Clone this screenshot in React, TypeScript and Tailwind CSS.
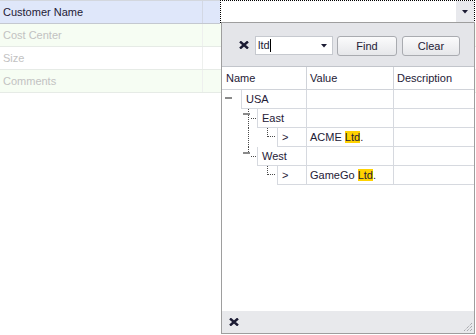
import React from 'react';

const ink = 'text-[#1e2036]';

const BoldX = () => (
  <svg width="10" height="8" viewBox="0 0 10 8" className="shrink-0">
    <path d="M1 0.5 L9 7.5 M9 0.5 L1 7.5" stroke="#1c1c34" strokeWidth="2.4" />
  </svg>
);

const Caret = () => (
  <svg width="6" height="4" viewBox="0 0 6 4" className="shrink-0">
    <path d="M0 0 H6 L3 3.5 Z" fill="#1c1c34" />
  </svg>
);

const Hi = ({ children }: { children: React.ReactNode }) => (
  <span className="bg-[#ffd200]">{children}</span>
);

const dot = { stroke: '#4a4a4a', strokeWidth: 1, strokeDasharray: '1 1', shapeRendering: 'crispEdges' as const };
const dash = '#8a8a8a';

// tree connector drawings, one per indent cell
const lines: Record<string, React.ReactNode> = {
  root: <rect x="3" y="7" width="7" height="2" fill={dash} />,
  groupFirst: (
    <>
      <line x1="26.5" y1="0" x2="26.5" y2="19" {...dot} />
      <rect x="21" y="4" width="7" height="2" fill={dash} />
      <line x1="29" y1="9.5" x2="35" y2="9.5" {...dot} />
    </>
  ),
  groupLast: (
    <>
      <line x1="26.5" y1="0" x2="26.5" y2="5" {...dot} />
      <rect x="21" y="5" width="7" height="2" fill={dash} />
      <line x1="29" y1="9.5" x2="35" y2="9.5" {...dot} />
    </>
  ),
  leafMid: (
    <>
      <line x1="26.5" y1="0" x2="26.5" y2="19" {...dot} />
      <line x1="45.5" y1="0" x2="45.5" y2="9" {...dot} />
      <line x1="46" y1="8.5" x2="54" y2="8.5" {...dot} />
    </>
  ),
  leafLast: (
    <>
      <line x1="45.5" y1="0" x2="45.5" y2="9" {...dot} />
      <line x1="46" y1="8.5" x2="54" y2="8.5" {...dot} />
    </>
  ),
};

interface Node {
  indent: number;
  kind: string;
  name: string;
  value?: React.ReactNode;
}

const nodes: Node[] = [
  { indent: 19, kind: 'root', name: 'USA' },
  { indent: 35, kind: 'groupFirst', name: 'East' },
  { indent: 55, kind: 'leafMid', name: '>', value: <span>ACME <Hi>Ltd</Hi>.</span> },
  { indent: 35, kind: 'groupLast', name: 'West' },
  { indent: 55, kind: 'leafLast', name: '>', value: <span>GameGo <Hi>Ltd</Hi>.</span> },
];

const TreeRow = ({ node }: { node: Node }) => (
  <div className="flex h-[19px]">
    <svg width={node.indent} height="19" className="shrink-0">
      {lines[node.kind]}
    </svg>
    <div className="flex flex-1 border-b border-[#d6d9df]">
      <div
        className={`flex items-center border-l border-r border-[#d6d9df] pl-[4px] ${
          node.indent === 55 ? 'w-[30px]' : node.indent === 35 ? 'w-[50px]' : 'w-[66px]'
        }`}
      >
        {node.name}
      </div>
      <div className="flex w-[87px] items-center border-r border-[#d6d9df] pl-[3px]">{node.value}</div>
      <div className="flex-1" />
    </div>
  </div>
);

const captions = [
  { label: 'Customer Name', bg: 'bg-[#dfe7fa]', text: ink },
  { label: 'Cost Center', bg: 'bg-[#f6fdf3]', text: 'text-[#c2c2c2]' },
  { label: 'Size', bg: 'bg-white', text: 'text-[#c2c2c2]' },
  { label: 'Comments', bg: 'bg-[#f6fdf3]', text: 'text-[#c2c2c2]' },
];

export default function App() {
  return (
    <div className="relative h-[335px] w-[476px] overflow-hidden bg-white font-['Liberation_Sans',Arial,sans-serif] text-[11px] leading-none">
      {/* property grid */}
      <div className="flex h-[24px]">
        <div className={`flex w-[220px] border-y border-t-[#d3d7de] border-b-[#c4c8d0] ${captions[0].bg}`}>
          <div className={`flex w-[203px] items-center border-r border-[#d3d8e4] pl-[3px] ${ink}`}>Customer Name</div>
        </div>
        <div className="flex h-[23px] w-[255px] border border-dotted border-black">
          <div className="flex-1" />
          <div className="flex w-[18px] items-center justify-center bg-[#e8e9ed]">
            <Caret />
          </div>
        </div>
      </div>
      {captions.slice(1).map((c) => (
        <div key={c.label} className={`flex h-[23px] border-b border-[#e6ebe6] ${c.bg}`}>
          <div className={`flex w-[203px] items-center border-r border-[#eef0ee] pl-[3px] ${c.text}`}>{c.label}</div>
        </div>
      ))}

      {/* dropdown popup */}
      <div className={`absolute left-[221px] top-[22px] flex h-[312px] w-[254px] flex-col border border-[#9e9e9e] bg-white ${ink}`}>
        <div className="flex h-[44px] shrink-0 items-start border-b border-[#c2c5cb] bg-[#e4e5e9] pl-[17px] pt-[13px]">
          <div className="mt-[5px]">
            <BoldX />
          </div>
          <div className="ml-[6px] flex h-[19px] w-[78px] items-center border border-[#c6c9cf] bg-white pl-[2px] pr-[5px]">
            <span>ltd</span>
            <span className="h-[13px] w-px bg-black" />
            <div className="flex-1" />
            <Caret />
          </div>
          <button className="ml-[4px] h-[20px] w-[60px] rounded-[3px] border border-[#a9abb0] bg-gradient-to-b from-[#fbfbfc] to-[#e6e7ea]">
            Find
          </button>
          <button className="ml-[5px] h-[20px] w-[58px] rounded-[3px] border border-[#a9abb0] bg-gradient-to-b from-[#fbfbfc] to-[#e6e7ea]">
            Clear
          </button>
        </div>

        <div className="flex-1">
          <div className="flex h-[23px] border-b border-[#d0d3d9]">
            <div className="flex w-[85px] items-center border-r border-[#d0d3d9] pl-[4px]">Name</div>
            <div className="flex w-[87px] items-center border-r border-[#d0d3d9] pl-[3px]">Value</div>
            <div className="flex flex-1 items-center pl-[3px]">Description</div>
          </div>
          {nodes.map((n, i) => (
            <TreeRow key={i} node={n} />
          ))}
        </div>

        <div className="flex h-[22px] shrink-0 items-center bg-[#e8e9ec] pl-[7px]">
          <BoldX />
          <div className="flex-1" />
          <svg width="12" height="12" viewBox="0 0 12 12" className="mb-[1px] mr-[1px] self-end">
            <path d="M11 3 L3 11 M11 6 L6 11 M11 9 L9 11" stroke="#8d8f94" strokeWidth="1" strokeDasharray="1 1" />
          </svg>
        </div>
      </div>
    </div>
  );
}
